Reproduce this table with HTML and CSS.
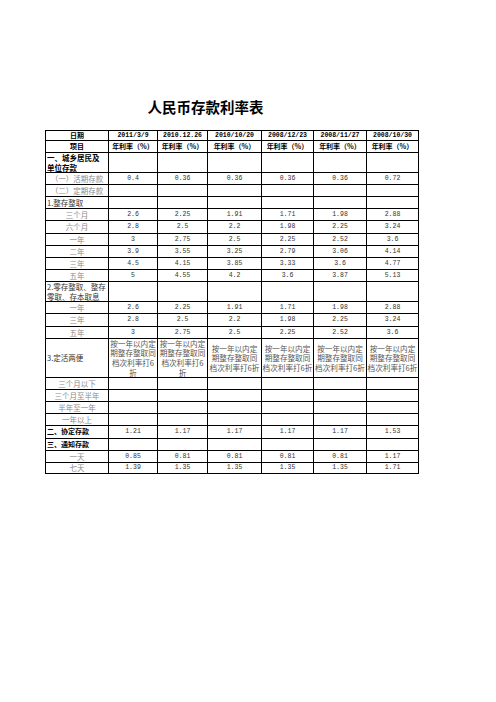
FILE: index.html
```html
<!DOCTYPE html>
<html lang="zh-CN">
<head>
<meta charset="utf-8">
<title>人民币存款利率表</title>
<link rel="stylesheet" href="styles.css">
</head>
<body>
<div class="page">
  <h1 class="title">人民币存款利率表</h1>
  <div class="sheet" role="table">
    <div class="row h10" role="row"><div class="c b">日期</div><div class="c d">2011/3/9</div><div class="c d">2010.12.26</div><div class="c d">2010/10/20</div><div class="c d">2008/12/23</div><div class="c d">2008/11/27</div><div class="c d">2008/10/30</div></div>
    <div class="row h12" role="row"><div class="c b">项目</div><div class="c b">年利率（%）</div><div class="c b">年利率（%）</div><div class="c b">年利率（%）</div><div class="c b">年利率（%）</div><div class="c b">年利率（%）</div><div class="c b">年利率（%）</div></div>
    <div class="row h20" role="row"><div class="c b l two">一、城乡居民及<br>单位存款</div><div class="c"></div><div class="c"></div><div class="c"></div><div class="c"></div><div class="c"></div><div class="c"></div></div>
    <div class="row h12" role="row"><div class="c g">（一）活期存款</div><div class="c n">0.4</div><div class="c n">0.36</div><div class="c n">0.36</div><div class="c n">0.36</div><div class="c n">0.36</div><div class="c n">0.72</div></div>
    <div class="row h12" role="row"><div class="c g">（二）定期存款</div><div class="c"></div><div class="c"></div><div class="c"></div><div class="c"></div><div class="c"></div><div class="c"></div></div>
    <div class="row h12" role="row"><div class="c k l">1.整存整取</div><div class="c"></div><div class="c"></div><div class="c"></div><div class="c"></div><div class="c"></div><div class="c"></div></div>
    <div class="row h12" role="row"><div class="c g">三个月</div><div class="c n">2.6</div><div class="c n">2.25</div><div class="c n">1.91</div><div class="c n">1.71</div><div class="c n">1.98</div><div class="c n">2.88</div></div>
    <div class="row h13" role="row"><div class="c g">六个月</div><div class="c n">2.8</div><div class="c n">2.5</div><div class="c n">2.2</div><div class="c n">1.98</div><div class="c n">2.25</div><div class="c n">3.24</div></div>
    <div class="row h12" role="row"><div class="c g">一年</div><div class="c n">3</div><div class="c n">2.75</div><div class="c n">2.5</div><div class="c n">2.25</div><div class="c n">2.52</div><div class="c n">3.6</div></div>
    <div class="row h12" role="row"><div class="c g">二年</div><div class="c n">3.9</div><div class="c n">3.55</div><div class="c n">3.25</div><div class="c n">2.79</div><div class="c n">3.06</div><div class="c n">4.14</div></div>
    <div class="row h12" role="row"><div class="c g">三年</div><div class="c n">4.5</div><div class="c n">4.15</div><div class="c n">3.85</div><div class="c n">3.33</div><div class="c n">3.6</div><div class="c n">4.77</div></div>
    <div class="row h12" role="row"><div class="c g">五年</div><div class="c n">5</div><div class="c n">4.55</div><div class="c n">4.2</div><div class="c n">3.6</div><div class="c n">3.87</div><div class="c n">5.13</div></div>
    <div class="row h20" role="row"><div class="c k l two">2.零存整取、整存<br>零取、存本取息</div><div class="c"></div><div class="c"></div><div class="c"></div><div class="c"></div><div class="c"></div><div class="c"></div></div>
    <div class="row h12" role="row"><div class="c g">一年</div><div class="c n">2.6</div><div class="c n">2.25</div><div class="c n">1.91</div><div class="c n">1.71</div><div class="c n">1.98</div><div class="c n">2.88</div></div>
    <div class="row h13" role="row"><div class="c g">三年</div><div class="c n">2.8</div><div class="c n">2.5</div><div class="c n">2.2</div><div class="c n">1.98</div><div class="c n">2.25</div><div class="c n">3.24</div></div>
    <div class="row h12" role="row"><div class="c g">五年</div><div class="c n">3</div><div class="c n">2.75</div><div class="c n">2.5</div><div class="c n">2.25</div><div class="c n">2.52</div><div class="c n">3.6</div></div>
    <div class="row h39" role="row"><div class="c k l">3.定活两便</div><div class="c t">按一年以内定<br>期整存整取同<br>档次利率打6<br>折</div><div class="c t">按一年以内定<br>期整存整取同<br>档次利率打6<br>折</div><div class="c t">按一年以内定<br>期整存整取同<br>档次利率打6折</div><div class="c t">按一年以内定<br>期整存整取同<br>档次利率打6折</div><div class="c t">按一年以内定<br>期整存整取同<br>档次利率打6折</div><div class="c t">按一年以内定<br>期整存整取同<br>档次利率打6折</div></div>
    <div class="row h12" role="row"><div class="c g">三个月以下</div><div class="c"></div><div class="c"></div><div class="c"></div><div class="c"></div><div class="c"></div><div class="c"></div></div>
    <div class="row h12" role="row"><div class="c g">三个月至半年</div><div class="c"></div><div class="c"></div><div class="c"></div><div class="c"></div><div class="c"></div><div class="c"></div></div>
    <div class="row h12" role="row"><div class="c g">半年至一年</div><div class="c"></div><div class="c"></div><div class="c"></div><div class="c"></div><div class="c"></div><div class="c"></div></div>
    <div class="row h12" role="row"><div class="c g">一年以上</div><div class="c"></div><div class="c"></div><div class="c"></div><div class="c"></div><div class="c"></div><div class="c"></div></div>
    <div class="row h13" role="row"><div class="c b l">二、协定存款</div><div class="c n">1.21</div><div class="c n">1.17</div><div class="c n">1.17</div><div class="c n">1.17</div><div class="c n">1.17</div><div class="c n">1.53</div></div>
    <div class="row h12" role="row"><div class="c b l">三、通知存款</div><div class="c"></div><div class="c"></div><div class="c"></div><div class="c"></div><div class="c"></div><div class="c"></div></div>
    <div class="row h12" role="row"><div class="c g">一天</div><div class="c n">0.85</div><div class="c n">0.81</div><div class="c n">0.81</div><div class="c n">0.81</div><div class="c n">0.81</div><div class="c n">1.17</div></div>
    <div class="row h11" role="row"><div class="c g">七天</div><div class="c n">1.39</div><div class="c n">1.35</div><div class="c n">1.35</div><div class="c n">1.35</div><div class="c n">1.35</div><div class="c n">1.71</div></div>
  </div>
</div>
</body>
</html>
```

FILE: styles.css
```css
html, body {
  margin: 0;
  padding: 0;
  background: #fff;
}

.page {
  padding-top: 97px;
  font-family: "Noto Sans CJK SC", "Noto Sans", sans-serif;
  color: #000;
}

.title {
  width: 321px;
  margin: 0 0 13px 45px;
  height: 20px;
  line-height: 20px;
  text-align: center;
  font-size: 14.5px;
  font-weight: bold;
}

.sheet {
  margin-left: 45px;
  width: 374px;
  box-sizing: border-box;
  border-top: 1px solid #000;
  border-left: 1px solid #000;
}

.row {
  display: flex;
}

.h10 { height: 10px; }
.h11 { height: 11px; }
.h12 { height: 12px; }
.h13 { height: 13px; }
.h20 { height: 20px; }
.h39 { height: 39px; }

.c {
  box-sizing: border-box;
  height: 100%;
  border-right: 1px solid #000;
  border-bottom: 1px solid #000;
  display: flex;
  align-items: center;
  justify-content: center;
  text-align: center;
  font-size: 7.5px;
  line-height: 9.5px;
  white-space: nowrap;
  overflow: hidden;
}

.c:nth-child(1) { width: 63px; }
.c:nth-child(2) { width: 49px; }
.c:nth-child(3) { width: 50px; }
.c:nth-child(4) { width: 54px; }
.c:nth-child(5) { width: 52px; }
.c:nth-child(6) { width: 53px; }
.c:nth-child(7) { width: 52px; }

.b {
  font-weight: bold;
  color: #000;
  font-size: 7px;
}

.l {
  justify-content: flex-start;
  text-align: left;
  padding-left: 1px;
}

.two {
  font-size: 7.5px;
}

.g {
  color: #8a8a8a;
}

.k {
  color: #333;
}

.d {
  font-family: "Liberation Mono", monospace;
  font-weight: bold;
  font-size: 6.5px;
}

.n {
  font-family: "Liberation Mono", monospace;
  font-size: 6.5px;
  color: #333;
}

.t {
  color: #555;
  font-size: 7.6px;
  line-height: 9.6px;
}
```
